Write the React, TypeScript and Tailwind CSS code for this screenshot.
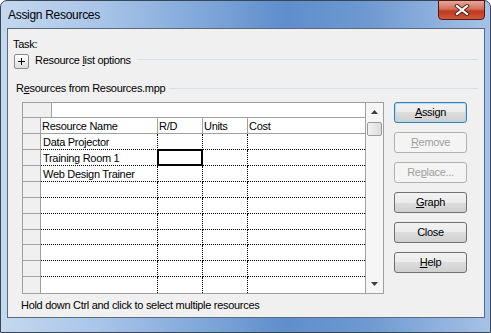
const ROWS = ["Data Projector", "Training Room 1", "Web Design Trainer", "", "", "", "", "", "", ""];

function DialogButton({ children, disabled, primary }: { children: React.ReactNode; disabled?: boolean; primary?: boolean }) {
  let cls = "border-[#707070] bg-[linear-gradient(180deg,#f2f2f2_0%,#ebebeb_50%,#dddddd_50%,#cfcfcf_100%)] text-black";
  if (primary) cls = "border-[#3c7fb1] bg-[linear-gradient(180deg,#f2f2f2_0%,#ebebeb_50%,#dddddd_50%,#cfcfcf_100%)] text-black shadow-[inset_0_0_0_1px_#a9ddf7]";
  if (disabled) cls = "border-[#adb2b5] bg-[#f4f4f4] text-[#a0a0a0]";
  return (
    <div className={`flex h-[21px] w-[73px] items-center justify-center rounded-[3px] border ${cls}`}>
      <span className="leading-[13px]">{children}</span>
    </div>
  );
}

function U({ children }: { children: React.ReactNode }) {
  return <span className="underline decoration-1 underline-offset-[1px]">{children}</span>;
}

export default function App() {
  return (
    <div className="h-[333px] w-[491px] bg-white font-['Liberation_Sans',Arial,sans-serif] text-[11px] tracking-[-0.3px] text-black">
      <div className="flex h-[333px] w-[491px] flex-col rounded-t-[7px] border border-[#384657] bg-[linear-gradient(90deg,#c4d8ef_0%,#a9c5e8_20%,#7ea6d9_42%,#5f8ecc_58%,#6e99d1_75%,#a6c2e6_100%)]">
        {/* Title bar */}
        <div className="flex h-[27px] items-start justify-between">
          <div className="pl-[7px] pt-[7px] text-[12px] leading-[15px] tracking-[-0.3px] text-black">Assign Resources</div>
          <div className="-mt-px mr-[5px] flex h-[20px] w-[47px] items-center justify-center rounded-b-[4px] border border-[#4f1c14] bg-[linear-gradient(180deg,#e9a797_0%,#d2705c_45%,#c1391c_55%,#d0563a_100%)]">
            <svg width="16" height="12" viewBox="0 0 16 12">
              <path d="M3 2 L13 10 M13 2 L3 10" stroke="#4a2018" strokeWidth="4" strokeLinecap="square" />
              <path d="M3 2 L13 10 M13 2 L3 10" stroke="#ffffff" strokeWidth="2.2" strokeLinecap="square" />
            </svg>
          </div>
        </div>

        {/* Client area */}
        <div className="ml-[6px] flex h-[290px] w-[478px] flex-col border border-[#5a6b80] bg-[#f0f0f0]">
          <div className="ml-[5px] mt-[8px] h-[14px] leading-[14px]">Task:</div>

          <div className="ml-[6px] mt-[3px] flex h-[15px] items-center">
            <div className="flex h-[15px] w-[15px] items-center justify-center rounded-[2px] border border-[#8a8a8a] bg-[linear-gradient(180deg,#ffffff,#dcdcdc)]">
              <svg width="7" height="7" viewBox="0 0 7 7">
                <path d="M0 3.5 H7 M3.5 0 V7" stroke="#000" strokeWidth="1" />
              </svg>
            </div>
            <span className="mb-[4px] ml-[6px] leading-[14px]">
              Resource <U>l</U>ist options
            </span>
            <div className="mb-[4px] ml-[6px] mr-[6px] h-px flex-1 bg-[#d5dfe5]" />
          </div>

          <div className="ml-[8px] mt-[12px] flex h-[14px] items-center">
            <span className="leading-[14px]">
              R<U>e</U>sources from Resources.mpp
            </span>
            <div className="ml-[4px] mr-[6px] h-px flex-1 bg-[#d5dfe5]" />
          </div>

          <div className="ml-[14px] mt-[7px] flex items-start">
            {/* Grid */}
            <div className="flex h-[192px] w-[362px] border border-[#a0a0a0] bg-white">
              <div className="flex w-[343px] flex-col border-r border-[#a0a0a0]">
                <div className="flex h-[15px] border-b border-[#a0a0a0]">
                  <div className="w-[29px] border-r border-[#a0a0a0] bg-[#f0f0f0]" />
                  <div className="flex-1 bg-white" />
                </div>
                <div className="flex h-[16px] border-b border-[#a0a0a0]">
                  <div className="w-[18px] border-r border-[#a0a0a0] bg-[#f0f0f0]" />
                  <div className="w-[117px] border-r border-[#a0a0a0] pl-[1px] pt-[1px] leading-[15px]">Resource Name</div>
                  <div className="w-[45px] border-r border-[#a0a0a0] pl-[1px] pt-[1px] leading-[15px]">R/D</div>
                  <div className="w-[45px] border-r border-[#a0a0a0] pl-[1px] pt-[1px] leading-[15px]">Units</div>
                  <div className="flex-1 pl-[1px] pt-[1px] leading-[15px]">Cost</div>
                </div>
                {ROWS.map((name, i) => (
                  <div key={i} className="flex h-[16px]">
                    <div className={`w-[18px] border-r border-[#a0a0a0] bg-[#f0f0f0] ${i < 9 ? "border-b" : ""}`} />
                    <div className={`flex w-[117px] border-r border-dotted border-r-black ${i < 9 ? "border-b border-b-black" : ""} pl-[2px] pt-[1px] leading-[14px]`}>
                      {name}
                    </div>
                    <div className={`relative w-[45px] border-r border-dotted border-r-black ${i < 9 ? "border-b border-b-black" : ""}`}>
                      {i === 1 && <div className="absolute -left-px -top-px h-[17px] w-[46px] border-2 border-black" />}
                    </div>
                    <div className={`w-[45px] border-r border-dotted border-r-black ${i < 9 ? "border-b border-b-black" : ""}`} />
                    <div className={`flex-1 border-dotted ${i < 9 ? "border-b border-b-black" : ""}`} />
                  </div>
                ))}
              </div>
              {/* Scrollbar */}
              <div className="flex w-[17px] flex-col items-center bg-[#f6f6f6]">
                <svg className="mt-[7px]" width="7" height="4" viewBox="0 0 7 4">
                  <path d="M0 4 L3.5 0 L7 4 Z" fill="#404040" />
                </svg>
                <div className="mt-[8px] h-[14px] w-[15px] rounded-[2px] border border-[#9a9a9a] bg-[linear-gradient(90deg,#f2f2f2,#dcdcdc)]" />
                <div className="flex-1" />
                <svg className="mb-[7px]" width="7" height="4" viewBox="0 0 7 4">
                  <path d="M0 0 L7 0 L3.5 4 Z" fill="#404040" />
                </svg>
              </div>
            </div>

            {/* Buttons */}
            <div className="ml-[10px] flex flex-col gap-[9px]">
              <DialogButton primary>
                <U>A</U>ssign
              </DialogButton>
              <DialogButton disabled>
                <U>R</U>emove
              </DialogButton>
              <DialogButton disabled>
                Re<U>p</U>lace...
              </DialogButton>
              <DialogButton>
                <U>G</U>raph
              </DialogButton>
              <DialogButton>Close</DialogButton>
              <DialogButton>
                <U>H</U>elp
              </DialogButton>
            </div>
          </div>

          <div className="ml-[13px] mt-[4px] h-[14px] leading-[14px]">Hold down Ctrl and click to select multiple resources</div>
        </div>
      </div>
    </div>
  );
}
